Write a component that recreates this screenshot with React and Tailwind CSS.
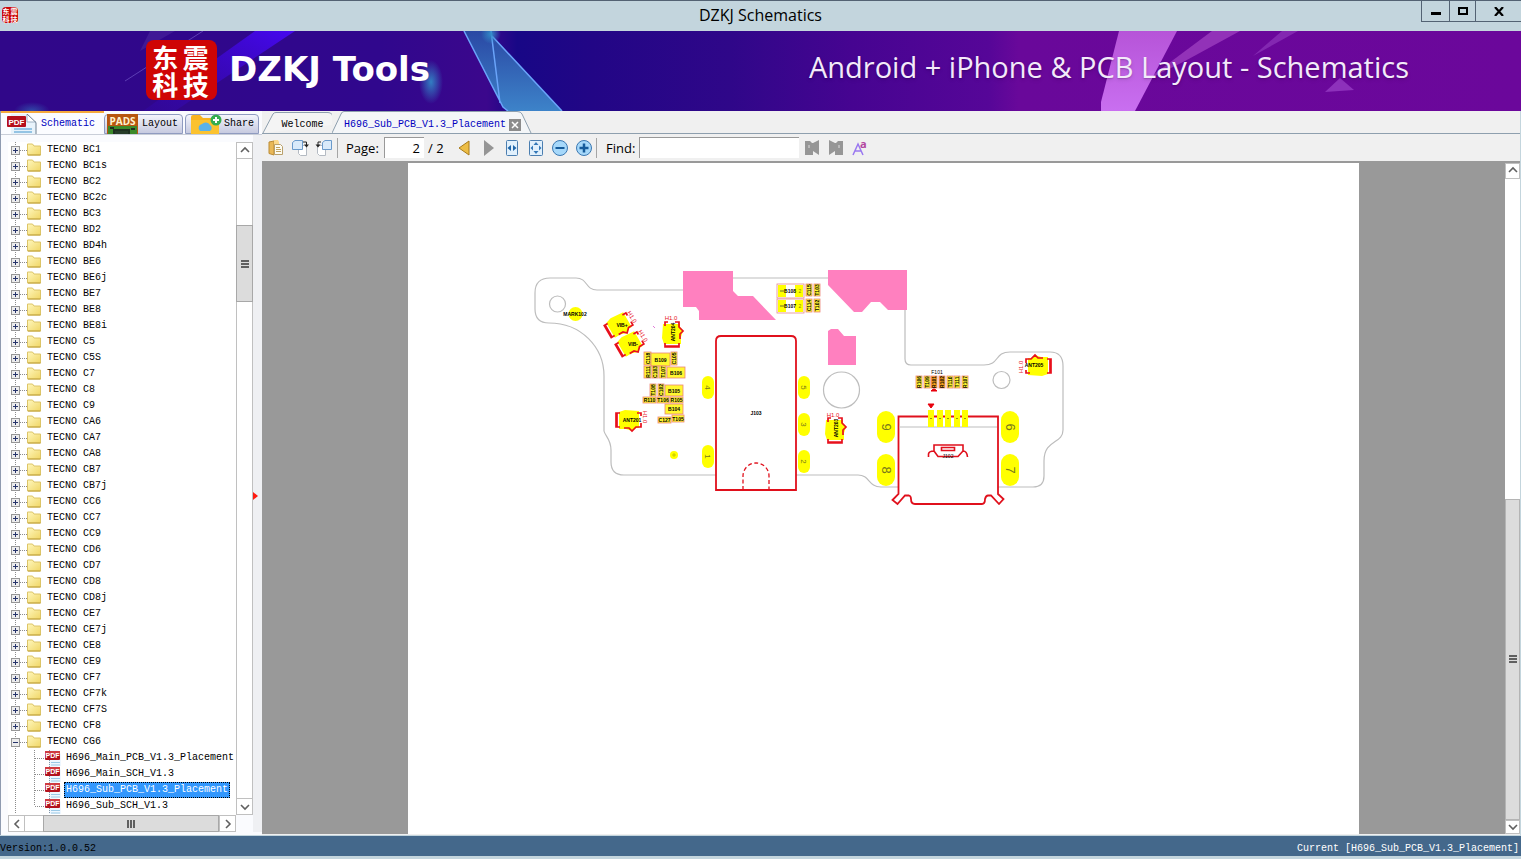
import React from "react";

const MONO = "font-['Liberation_Mono','Noto_Sans_CJK_SC',monospace] text-[10px] leading-4";
const UI = "font-['Open_Sans','Noto_Sans',sans-serif]";

const folders = [
  "BC1", "BC1s", "BC2", "BC2c", "BC3", "BD2", "BD4h", "BE6", "BE6j", "BE7", "BE8", "BE8i",
  "C5", "C5S", "C7", "C8", "C9", "CA6", "CA7", "CA8", "CB7", "CB7j", "CC6", "CC7", "CC9",
  "CD6", "CD7", "CD8", "CD8j", "CE7", "CE7j", "CE8", "CE9", "CF7", "CF7k", "CF7S", "CF8",
];

const files = [
  "H696_Main_PCB_V1.3_Placement",
  "H696_Main_SCH_V1.3",
  "H696_Sub_PCB_V1.3_Placement",
  "H696_Sub_SCH_V1.3",
];

function Chevron({ dir }) {
  const d = { up: "M2 7 6 3 10 7", down: "M2 4 6 8 10 4", left: "M8 2 4 6 8 10", right: "M4 2 8 6 4 10" }[dir];
  return (
    <svg className="h-3 w-3" viewBox="0 0 12 12" fill="none" stroke="#606060" strokeWidth="1.6" aria-hidden="true">
      <path d={d} />
    </svg>
  );
}

function ScrollButton({ dir, label, className }) {
  return (
    <button aria-label={label} className={"flex shrink-0 items-center justify-center border border-[#c0c0c0] bg-white " + className}>
      <Chevron dir={dir} />
    </button>
  );
}

function FolderIcon() {
  return (
    <svg className="h-4 w-4 shrink-0" viewBox="0 0 16 16" aria-hidden="true">
      <defs>
        <linearGradient id="fold" x1="0" y1="0" x2="1" y2="1">
          <stop offset="0" stopColor="#fff7bd" />
          <stop offset="1" stopColor="#f0d666" />
        </linearGradient>
      </defs>
      <path d="M.5 2h5l1.500 2h6.500v9H.5z" fill="url(#fold)" stroke="#dcc467" />
      <path d="M1 13h12.500" stroke="#bfa038" />
    </svg>
  );
}

function PdfIcon() {
  return (
    <svg className="h-4 w-4 shrink-0" viewBox="0 0 16 16" aria-hidden="true">
      <path d="M4 0h8l4 4v12H4z" fill="#eef7ff" />
      <path d="M6 12.500h9M6 15h9" stroke="#9bc9e6" />
      <path d="M4.500 0v16" stroke="#8295a8" strokeDasharray="1 1" />
      <rect x="0" y="1" width="15" height="9" rx="1" fill="#b3121d" />
      <rect x="0" y="1" width="15" height="4" rx="1" fill="#cf3a40" />
      <text x="7.500" y="8" fontSize="7" fontWeight="700" fill="#fff" textAnchor="middle" fontFamily="Liberation Sans, sans-serif">PDF</text>
    </svg>
  );
}

function Expander({ open, label }) {
  return (
    <button aria-label={label} aria-expanded={open} className="h-4 w-4 shrink-0">
      <svg className="h-4 w-4" viewBox="0 0 16 16" shapeRendering="crispEdges" aria-hidden="true">
        <path d="M4.500 0v16M9 8.500h7" stroke="#8c8c8c" strokeDasharray="1 1" />
        <rect x=".5" y="4.500" width="8" height="8" fill="#ececec" stroke="#969696" />
        <path d={open ? "M2 8.500h5" : "M2 8.500h5M4.500 6v5"} stroke="#26346b" />
      </svg>
    </button>
  );
}

function Sidebar() {
  return (
    <aside className="flex w-[262px] shrink-0 flex-col border-l border-[#8f9bb0] bg-[#fafbfe]">
      <div role="tablist" className={"flex h-[23px] shrink-0 items-end " + MONO}>
        <button role="tab" aria-selected="true" className="flex h-[23px] w-[103px] items-center gap-1 border-t-2 border-[#f5a93c] bg-[#fbfcff] pl-1 text-[#0000c0]">
          <svg className="h-5 w-8" viewBox="0 0 32 20" aria-hidden="true">
            <path d="M6 0h17l8 8v12H6z" fill="#e8f3fb" />
            <path d="M22 0v8h9" fill="#fff" stroke="#9db2c4" />
            <path d="M22 0 31 8.500V20" fill="none" stroke="#6d7f90" />
            <path d="M9 15h18M9 18h18" stroke="#94c4e4" strokeWidth="2" />
            <rect x="2" y="2" width="19" height="11" rx="1" fill="#b50f1b" />
            <text x="11.500" y="10.500" fontSize="8" fontWeight="700" fill="#fff" textAnchor="middle" fontFamily="Liberation Sans, sans-serif">PDF</text>
          </svg>
          Schematic
        </button>
        <button role="tab" aria-selected="false" className="flex h-5 w-[79px] items-center gap-1 rounded-t-sm border border-[#8f9bc0] bg-linear-to-b from-[#f4f5fc] to-[#c6cae0] pl-px">
          <svg className="h-5 w-8" viewBox="0 0 32 20" aria-hidden="true">
            <rect x="1" width="31" height="20" fill="#b7560f" />
            <rect x="2" y="12" width="29" height="8" fill="#3c8a2a" />
            <path d="M8 20v-4h15v4M4 14h4M25 15h4" fill="#263c28" stroke="#1e2f20" strokeWidth="2" />
            <text x="16.500" y="11" fontSize="10" fontWeight="700" fill="#fff2cf" textAnchor="middle" fontFamily="Open Sans, sans-serif">PADS</text>
          </svg>
          Layout
        </button>
        <button role="tab" aria-selected="false" className="ml-[2px] flex h-5 w-[74px] items-center gap-[2px] rounded-t-sm border border-[#8f9bc0] bg-linear-to-b from-[#f4f5fc] to-[#c6cae0] pl-1">
          <svg className="h-5 w-8" viewBox="0 0 32 20" aria-hidden="true">
            <path d="M1 3q0-2 2-2h7l3 3h14q2 0 2 2v14H1z" fill="#f9b320" />
            <path d="M1 6h28v14H1z" fill="#fbc22f" />
            <path d="M10 17a4 4 0 0 1 2-7 5 5 0 0 1 8 1 3.500 3.500 0 0 1 0 6z" fill="#5ab2ea" />
            <circle cx="26" cy="6" r="5.500" fill="#35ad4f" />
            <path d="M23 6h6M26 3v6" stroke="#fff" strokeWidth="2" />
          </svg>
          Share
        </button>
      </div>
      <div className="flex min-h-0 flex-1 border-t border-[#c9ced8] pb-[3px]">
        <div className="flex min-w-0 flex-1 flex-col pl-[7px] pt-[7px]">
          <div className="flex min-h-0 flex-1">
            <ul role="tree" className={"h-full min-h-0 w-[228px] overflow-hidden whitespace-nowrap bg-white pl-[3px] " + MONO}>
              {folders.map((f) => (
                <li key={f} role="treeitem" className="flex h-4 items-center">
                  <Expander open={false} label={"Expand TECNO " + f} />
                  <FolderIcon />
                  <span className="pl-1">TECNO {f}</span>
                </li>
              ))}
              <li role="treeitem">
                <div className="flex h-4 items-center">
                  <Expander open label="Collapse TECNO CG6" />
                  <FolderIcon />
                  <span className="pl-1">TECNO CG6</span>
                </div>
                <ul role="group">
                  {files.map((f, i) => (
                    <li key={f} role="treeitem" aria-selected={i === 2} className="flex h-4 items-center">
                      <svg className="h-4 w-[34px] shrink-0" viewBox="0 0 34 16" shapeRendering="crispEdges" aria-hidden="true">
                        <path d={"M4.500 0v16M24 8.500h10M23.500 0v" + (i === 3 ? "8" : "16")} stroke="#8c8c8c" strokeDasharray="1 1" />
                      </svg>
                      <PdfIcon />
                      <span className={i === 2 ? "ml-[3px] border border-dotted border-black bg-[#3297fd] px-px leading-[14px] text-white" : "pl-[5px]"}>{f}</span>
                    </li>
                  ))}
                </ul>
              </li>
              <li className="flex h-4 items-center pl-4" aria-hidden="true"><FolderIcon /></li>
            </ul>
            <div className="flex w-[17px] flex-col border-x border-[#c0c0c0] bg-white">
              <ScrollButton dir="up" label="Scroll tree up" className="-mx-px h-[17px]" />
              <div className="grow-2" />
              <div className="-mx-px flex h-[77px] flex-col items-center justify-center gap-px border border-[#a8a8a8] bg-[#dcdcdc]">
                <span className="h-[2px] w-2 bg-[#606060]" /><span className="h-[2px] w-2 bg-[#606060]" /><span className="h-[2px] w-2 bg-[#606060]" />
              </div>
              <div className="grow-15" />
              <ScrollButton dir="down" label="Scroll tree down" className="-mx-px h-[17px]" />
            </div>
          </div>
          <div className="flex h-[17px] w-[228px] shrink-0 border-y border-[#c0c0c0] bg-white">
            <ScrollButton dir="left" label="Scroll tree left" className="-my-px w-[17px]" />
            <div className="w-[18px]" />
            <div className="-my-px flex grow items-center justify-center gap-px border border-[#a8a8a8] bg-[#dcdcdc]">
              <span className="h-2 w-[2px] bg-[#606060]" /><span className="h-2 w-[2px] bg-[#606060]" /><span className="h-2 w-[2px] bg-[#606060]" />
            </div>
            <ScrollButton dir="right" label="Scroll tree right" className="-my-px w-[17px]" />
          </div>
        </div>
        <div className="flex w-[9px] shrink-0 items-center bg-[#eff0f3] pt-6">
          <svg className="h-2 w-[5px]" viewBox="0 0 5 8" aria-hidden="true"><path d="M0 0 5 4 0 8z" fill="#ff1a10" /></svg>
        </div>
      </div>
    </aside>
  );
}

function DocTabs() {
  return (
    <div role="tablist" className={"flex h-[23px] shrink-0 items-end border-b border-[#8e9fae] bg-[#f0f0f0] " + MONO}>
      <button role="tab" aria-selected="false" className="relative flex h-[22px] w-[70px] items-center justify-center pl-[11px] pt-[6px]">
        <svg className="absolute inset-0 h-full w-full" viewBox="0 0 70 22" aria-hidden="true">
          <path d="M1 22 11 3q1-1.500 3-1.500h52q3 0 4 2l4 10" fill="#f4f4f4" stroke="#8e9fae" />
        </svg>
        <span className="relative">Welcome</span>
      </button>
      <div className="relative flex h-[22px] w-[200px] items-center pl-[12px] pt-[6px]">
        <svg className="absolute inset-0 h-full w-full" viewBox="0 0 200 22" aria-hidden="true">
          <path d="M0 22 9 3q1-2.500 3-2.500h173q4 0 5 2.500l9 19" fill="#f4f6f8" stroke="#8e9fae" />
        </svg>
        <button role="tab" aria-selected="true" className="relative text-[#0000c0]">H696_Sub_PCB_V1.3_Placement</button>
        <button aria-label="Close tab" className="relative ml-[3px] flex h-3 w-3 items-center justify-center bg-[#8c8c8c]">
          <svg className="h-2 w-2" viewBox="0 0 8 8" stroke="#fff" strokeWidth="1.500" aria-hidden="true"><path d="M1 1 7 7M7 1 1 7" /></svg>
        </button>
      </div>
    </div>
  );
}

function ToolButton({ label, children }) {
  return (
    <button aria-label={label} className="flex h-6 w-6 shrink-0 items-center justify-center">
      <svg className="h-[18px] w-[18px] overflow-visible" viewBox="0 0 18 18" aria-hidden="true">{children}</svg>
    </button>
  );
}

function Toolbar() {
  return (
    <div className={"flex h-[27px] shrink-0 items-center bg-[#f0f0f0] pl-[2px] text-[13px] leading-5 text-black " + UI}>
      <ToolButton label="Open">
        <path d="M2 3 7 2v14l-5-1.500z" fill="#e9b857" stroke="#bb8b35" />
        <path d="M7 1h4l1 2v13H7z" fill="#fbd88b" />
        <path d="M7.500 5.500h6l2 2v8h-8z" fill="#fdfcf3" stroke="#b9a06c" />
        <path d="M9 8.500h4M9 10.500h5M9 12.500h5" stroke="#c1a360" />
      </ToolButton>
      <ToolButton label="Rotate right">
        <path d="M7.500 6.500h8v10h-6l-2-2z" fill="#fff" stroke="#b4bac2" />
        <path d="M1.500 3.500 4 1.500h7.500v9h-10z" fill="#d9eafa" stroke="#6a9acb" />
        <path d="M12 3h3.500v3" fill="none" stroke="#222" /><path d="M13 5.500h5l-2.500 3z" fill="#222" />
      </ToolButton>
      <ToolButton label="Rotate left">
        <path d="M2.500 6.500h8v10h-6l-2-2z" fill="#fff" stroke="#b4bac2" />
        <path d="M7.500 3.500 10 1.500h6.500v9h-9z" fill="#d9eafa" stroke="#6a9acb" />
        <path d="M6 3H3v3" fill="none" stroke="#222" /><path d="M.5 5.500h5L3 8.500z" fill="#222" />
      </ToolButton>
      <div className="mx-px h-5 w-px bg-[#a5a5a5]" />
      <label htmlFor="page" className="w-[45px] pl-[7px]">Page:</label>
      <input id="page" defaultValue="2" className="h-[21px] w-10 border-l border-t border-[#999] bg-white pr-1 text-right outline-none" />
      <span className="w-7 pl-1">/ 2</span>
      <ToolButton label="Previous page"><path d="M14 2v14L4 9z" fill="#edbd45" stroke="#a87b1b" /></ToolButton>
      <ToolButton label="Next page"><path d="M5 1 15 9 5 17z" fill="#959595" /></ToolButton>
      <ToolButton label="Fit width">
        <rect x="3.500" y="1.500" width="11" height="15" rx="1" fill="#e1f0fc" stroke="#4b7eb0" />
        <path d="M4.500 9 8 6v6zM13.500 9 10 6v6z" fill="#1f66a9" />
      </ToolButton>
      <ToolButton label="Fit page">
        <rect x="2.500" y="1.500" width="13" height="15" rx="1" fill="#e1f0fc" stroke="#4b7eb0" />
        <path d="M9 3 11.500 6h-5zM9 15 6.500 12h5zM3.500 9 6 6.500v5zM14.500 9 12 6.500v5z" fill="#3478b8" />
      </ToolButton>
      <ToolButton label="Zoom out">
        <circle cx="9" cy="9" r="7.500" fill="#a6d8fa" stroke="#3b78b2" /><path d="M4.500 9h9" stroke="#155b9b" strokeWidth="2" />
      </ToolButton>
      <ToolButton label="Zoom in">
        <circle cx="9" cy="9" r="7.500" fill="#a6d8fa" stroke="#3b78b2" /><path d="M4.500 9h9M9 4.500v9" stroke="#155b9b" strokeWidth="2.500" />
      </ToolButton>
      <div className="h-5 w-px bg-[#a5a5a5]" />
      <label htmlFor="find" className="w-[42px] pl-[9px]">Find:</label>
      <input id="find" className="h-[21px] w-40 border-l border-t border-[#999] bg-white px-1 outline-none" />
      <ToolButton label="Find previous"><path d="M3 2h5l2 2h1l6-3v15l-6-4v4H3z" fill="#969696" /><path d="M7 6v3" stroke="#ddd" /></ToolButton>
      <ToolButton label="Find next"><path d="M17 2h-5l-2 2H9L3 1v15l6-4v4h8z" fill="#969696" /><path d="M13 6v3" stroke="#ddd" /></ToolButton>
      <ToolButton label="Match case">
        <path d="M3 16 8 5l5 11M5 12h6" fill="none" stroke="#9a78f0" strokeWidth="1.500" />
        <text x="10" y="9" fontSize="11" fontWeight="700" fill="#b2459f" fontFamily="Open Sans, sans-serif">a</text>
      </ToolButton>
    </div>
  );
}

/* Small parts: [label, x, y, width, height, vertical label] */
const parts = [
  ["C118", 644, 352, 7, 13, 1], ["B109", 651, 353, 19, 13, 0], ["C105", 671, 352, 6, 13, 1],
  ["R111", 644, 366, 7, 12, 1], ["C103", 652, 366, 6, 12, 1], ["T107", 659, 366, 7, 12, 1], ["B106", 667, 367, 18, 11, 0],
  ["T108", 650, 384, 6, 12, 1], ["C102", 658, 384, 6, 12, 1], ["B105", 665, 385, 18, 11, 0],
  ["R110", 643, 397, 13, 6, 0], ["T106", 657, 397, 12, 6, 0], ["R105", 670, 397, 13, 6, 0],
  ["B104", 665, 404, 18, 10, 0], ["T105", 672, 415, 12, 7, 0], ["C127", 658, 417, 13, 6, 0],
  ["C115", 806, 284, 6, 12, 1], ["T103", 814, 284, 6, 12, 1], ["C114", 806, 299, 6, 13, 1], ["T102", 814, 299, 6, 13, 1],
  ["R106", 916, 376, 6, 12, 1], ["T109", 924, 376, 6, 12, 1], ["R101", 931, 376, 6, 12, 1], ["R102", 939, 376, 6, 12, 1],
  ["T110", 947, 376, 6, 12, 1], ["T111", 954, 376, 6, 12, 1], ["R107", 962, 376, 6, 12, 1],
];

/* Pads: [number, x, y, width, height, font size] */
const pads = [
  ["4", 702, 376, 12, 23, 8], ["1", 702, 445, 12, 23, 8],
  ["5", 798, 376, 12, 23, 8], ["3", 798, 413, 12, 23, 8], ["2", 798, 450, 12, 23, 8],
  ["9", 877, 411, 18, 32, 13], ["8", 877, 454, 18, 32, 13],
  ["6", 1001, 411, 18, 32, 13], ["7", 1001, 454, 18, 32, 13],
];

/* Spring contacts: [label, x, y, turn, label x, label y, label turn, H1.0 x, H1.0 y, H1.0 turn] */
const contacts = [
  ["VIB+", 619, 325, 60, 622, 326, 0, 632, 317, 60],
  ["VIB-", 630, 344, 60, 633, 345, 0, 643, 336, 60],
  ["ANT204", 672, 334, 0, 674, 332, -90, 671, 318, 0],
  ["ANT201", 629, 420, 90, 632, 421, 0, 645, 417, 90],
  ["ANT203", 835, 430, 0, 837, 428, -90, 833, 415, 0],
  ["ANT205", 1038, 366, -90, 1034, 366, 0, 1021, 367, -90],
];

function BoardDrawing() {
  return (
    <svg className="block w-full" viewBox="408 163 951 671" role="img" aria-label="H696 sub board placement" fontFamily="Liberation Sans, sans-serif">
      <g fill="none" stroke="#bdbdbd" strokeWidth="1.200">
        <path d="M683 290H597C585 290 588 278 576 278H550Q535 278 535 293V309Q535 323 549 323C581 323 604 347 604 376V431C605 436 611 439 611 450V462Q611 475 624 475H858C870 475 868 487 881 487H1033Q1044 487 1044 476V461C1044 439 1063 444 1063 430V366Q1063 352 1050 352H1010C994 352 1000 365 984 365H911Q905 365 905 359V300M733 278H830" />
        <circle cx="557.500" cy="304" r="8" />
        <circle cx="841.500" cy="390" r="18" />
        <circle cx="1001.500" cy="380" r="8.500" />
      </g>
      <g fill="#ff80bf">
        <path d="M683 271H733V291L738 296H753L776 320H699V311L696 307H683z" />
        <path d="M828 270H907V310H888L880 302H871L862 312H854L828 285z" />
        <path d="M828 331 831 329H838L844 336H856V365H828z" />
      </g>
      <circle cx="575.500" cy="314" r="7" fill="#ff0" />
      <text x="575" y="316" fontSize="5" fontWeight="700" textAnchor="middle">MARK102</text>
      <circle cx="674" cy="455" r="4" fill="#ff0" />
      <path d="M672 455h4M674 453v4" stroke="#a8a800" strokeWidth=".6" />
      <path d="m653 326 2 2" stroke="#e17bd8" />

      {[["B108", 284], ["B107", 299]].map(([t, y]) => (
        <g key={t}>
          <rect x="777" y={y} width="27" height="14" fill="#fff" stroke="#e48a8a" strokeWidth=".8" />
          <rect x="778" y={y + 1} width="8" height="12" fill="#ff0" />
          <rect x="795" y={y + 1} width="8" height="12" fill="#ff0" />
          <text x="790" y={y + 9} fontSize="5" fontWeight="700" textAnchor="middle">{t}</text>
          <text x="800" y={y + 9} fontSize="5" fill="#888800" textAnchor="middle">2</text>
          <path d={"M780 " + (y + 7) + "h4"} stroke="#444" strokeWidth=".8" />
        </g>
      ))}

      {parts.map(([t, x, y, w, h, v]) => (
        <g key={t}>
          <rect x={x} y={y} width={w} height={h} fill={t === "R101" || t === "R102" ? "#f7a01c" : "#fff830"} stroke="#ec8578" strokeWidth=".8" />
          <text
            transform={"translate(" + (x + w / 2) + " " + (y + h / 2) + ")" + (v ? " rotate(-90)" : "")}
            y="2" fontSize="5" fontWeight="700" textAnchor="middle"
          >{t}</text>
        </g>
      ))}
      <text x="937" y="374" fontSize="5" textAnchor="middle">F101</text>
      <path d="M931 391q3-4 6 0zM928 404h6l-3 4z" fill="#e8000c" stroke="#e8000c" />

      {contacts.map(([t, x, y, r, lx, ly, lr, hx, hy, hr]) => (
        <g key={t}>
          <g transform={"translate(" + x + " " + y + ") rotate(" + r + ")"}>
            <path d="M-9-10H8V-7L11-3 9 3V10H-8L-10 4z" fill="#ff0" />
            <path d="M-7 9v4H7V9M-7 12H7M-7-8v-4h3M3-12h4v5l4 4-3 3v5" fill="none" stroke="#e8101c" strokeWidth="1.700" />
          </g>
          <text transform={"translate(" + lx + " " + ly + ") rotate(" + lr + ")"} y="1" fontSize="5" fontWeight="700" textAnchor="middle">{t}</text>
          <text transform={"translate(" + hx + " " + hy + ") rotate(" + hr + ")"} y="2" fontSize="6" fill="#e8101c" textAnchor="middle">H1.0</text>
        </g>
      ))}

      {pads.map(([t, x, y, w, h, s]) => (
        <g key={t}>
          <rect x={x} y={y} width={w} height={h} rx={w / 2} fill="#ff0" />
          <text transform={"translate(" + (x + w / 2) + " " + (y + h / 2) + ") rotate(90)"} y={s / 3} fontSize={s} fill="#77771c" textAnchor="middle">{t}</text>
        </g>
      ))}

      <g fill="none" stroke="#e0101c" strokeWidth="1.800">
        <path d="M716 490V341Q716 336 721 336H791Q796 336 796 341V490z" fill="#fff" />
        <path d="M743 490V476A13 13 0 0 1 769 476V490" strokeDasharray="4 2.500" strokeWidth="1.300" />
        <path d="M898.500 416.500V494L892.500 500 897.500 504 905 495.500H909Q911 496 911 499 911 504 915 504H982Q985 504 985 499 986 495.500 988 495.500H991L999 504 1003.500 499 998 494V416.500z" fill="#fff" />
        <path d="M899 427H997" stroke="#bdbdbd" strokeWidth="1" />
        <path d="M928.500 457V454Q929 451 934 451V445H963V451Q967 451 967.500 457M934 451 938 456.500H958L963 451M941.500 447.500H954.500V450.500H941.500z" strokeWidth="1.600" />
      </g>
      {[928, 937, 945, 954, 962].map((x) => (
        <g key={x}>
          <rect x={x} y="410" width="6" height="17" fill="#ff0" />
          <path d={"M" + (x + 2) + " 418.500h2"} stroke="#999900" />
        </g>
      ))}
      <text x="756" y="415" fontSize="5" fontWeight="700" textAnchor="middle">J103</text>
      <text x="948" y="458" fontSize="5" textAnchor="middle">J102</text>
    </svg>
  );
}

function Banner() {
  return (
    <header className="relative flex h-20 shrink-0 items-center justify-between overflow-hidden bg-[#30078a] pl-[146px] pr-[112px]">
      <svg className="absolute inset-0 h-full w-full" viewBox="0 0 1521 80" preserveAspectRatio="none" aria-hidden="true">
        <defs>
          <linearGradient id="bg">
            <stop offset="0" stopColor="#300789" /><stop offset=".25" stopColor="#30078d" /><stop offset=".32" stopColor="#3b078c" />
            <stop offset=".34" stopColor="#180786" /><stop offset=".39" stopColor="#220686" /><stop offset=".48" stopColor="#2f0789" />
            <stop offset=".56" stopColor="#460491" /><stop offset=".65" stopColor="#560698" /><stop offset=".67" stopColor="#69089a" />
            <stop offset="1" stopColor="#6b079b" />
          </linearGradient>
          <linearGradient id="beam" x1="1" y1="0" x2="0" y2="1">
            <stop offset="0" stopColor="#4608f0" /><stop offset="1" stopColor="#3608c0" stopOpacity=".2" />
          </linearGradient>
          <linearGradient id="shard" x1="0" y1="0" x2="0" y2="1">
            <stop offset="0" stopColor="#2a48a4" /><stop offset="1" stopColor="#3d83c9" />
          </linearGradient>
          <linearGradient id="ray" x1="0" y1="0" x2="0" y2="1">
            <stop offset="0" stopColor="#b654d8" /><stop offset="1" stopColor="#c96ff0" />
          </linearGradient>
          <radialGradient id="glow"><stop offset="0" stopColor="#328bc8" /><stop offset="1" stopColor="#328bc8" stopOpacity="0" /></radialGradient>
        </defs>
        <path d="M0 0h1521v80H0z" fill="url(#bg)" />
        <path d="M255 0h40L175 80h-32z" fill="url(#beam)" />
        <path d="M203 0 125 50" stroke="#8a75de" opacity=".5" />
        <path d="M150 0h25l-35 20z" fill="#6347b0" opacity=".3" />
        <ellipse cx="431" cy="51" rx="12" ry="22" fill="url(#glow)" opacity=".9" />
        <ellipse cx="32" cy="80" rx="18" ry="9" fill="url(#glow)" opacity=".5" />
        <path d="M464 0h28v5L562 80H508L503 76z" fill="url(#shard)" />
        <path d="M464 0 503 76 508 80M491 0 500 72M492 5 562 80" fill="none" stroke="#6aa4fa" strokeWidth="1.500" />
        <circle cx="491" cy="3" r="10" fill="url(#glow)" />
        <path d="M1212 0h28l-55 30-40 20z" fill="#a445c4" opacity=".7" />
        <path d="M1282 0h16l-45 25z" fill="#9b48c8" opacity=".5" />
        <path d="M1119 0h58L1135 80h-34v-9z" fill="url(#ray)" />
        <path d="m1325 61 15-14 14 12z" fill="#8d31bb" />
      </svg>
      <div className="relative mb-1 flex items-center gap-3">
        <div className="mt-[2px] grid h-[60px] w-[71px] grid-cols-2 content-center justify-items-center rounded-lg bg-[#cf0505] pl-1 pr-[6px] font-['Noto_Sans_CJK_SC',sans-serif] text-[26px] font-bold leading-[27px] text-white">
          <span>东</span><span>震</span><span>科</span><span>技</span>
        </div>
        <h1 className="whitespace-nowrap font-['DejaVu_Sans',sans-serif] text-[34px] font-bold leading-10 text-white">DZKJ Tools</h1>
      </div>
      <p className={"relative mb-2 whitespace-nowrap text-[29px] leading-10 text-[#f3eafa] text-shadow-md " + UI}>Android + iPhone &amp; PCB Layout - Schematics</p>
    </header>
  );
}

export default function App() {
  return (
    <div className="flex h-screen flex-col overflow-hidden bg-[#c3d5dd] text-black">
      <div className="flex h-[31px] shrink-0 items-start border-t border-[#536273]">
        <div className="flex w-[100px] pl-[2px] pt-[6px]">
          <div className="grid h-4 w-4 grid-cols-2 place-items-center rounded-sm bg-[#cc0808] font-['Noto_Sans_CJK_SC',sans-serif] text-[7px] font-bold leading-[7px] text-white">
            <span>东</span><span>震</span><span>科</span><span>技</span>
          </div>
        </div>
        <div className={"flex-1 pt-[4px] text-center text-[16px] leading-5 " + UI}>DZKJ Schematics</div>
        <div className="flex h-[21px] w-[100px] border-b border-l border-[#536273]">
          <button aria-label="Minimize" className="flex w-7 items-center justify-center border-r border-[#536273]"><span className="mt-1 h-[3px] w-[10px] bg-black" /></button>
          <button aria-label="Maximize" className="flex w-[26px] items-center justify-center border-r border-[#536273]"><span className="h-2 w-[10px] border-2 border-black" /></button>
          <button aria-label="Close" className="flex flex-1 items-center justify-center">
            <svg className="h-[9px] w-[10px]" viewBox="0 0 10 9" stroke="#000" strokeWidth="2.200" aria-hidden="true"><path d="M1 0 9 9M9 0 1 9" /></svg>
          </button>
        </div>
      </div>
      <Banner />
      <div className="mr-px flex min-h-0 flex-1 bg-[#f0f0f0]">
        <Sidebar />
        <main className="flex min-w-0 flex-1 flex-col">
          <DocTabs />
          <Toolbar />
          <div className="mb-px flex min-h-0 flex-1 border-t-2 border-[#999]">
            <div className="flex min-w-0 flex-1 justify-center overflow-hidden bg-[#999]">
              <div className="w-[951px] max-w-full bg-white"><BoardDrawing /></div>
            </div>
            <div className="flex w-[15px] shrink-0 flex-col bg-white">
              <ScrollButton dir="up" label="Scroll page up" className="h-4" />
              <div className="flex-1" />
              <div className="flex flex-1 flex-col items-center justify-center gap-px border border-[#b4b4b4] bg-[#dcdcdc]">
                <span className="h-[2px] w-2 bg-[#606060]" /><span className="h-[2px] w-2 bg-[#606060]" /><span className="h-[2px] w-2 bg-[#606060]" />
              </div>
              <ScrollButton dir="down" label="Scroll page down" className="h-[14px]" />
            </div>
          </div>
        </main>
      </div>
      <footer className={"mb-[3px] flex h-[21px] shrink-0 items-end justify-between border-t border-[#c3d5dd] bg-[#44688b] pr-[2px] " + MONO}>
        <span className="-mb-px">Version:1.0.0.52</span>
        <span className="-mb-px text-white">Current [H696_Sub_PCB_V1.3_Placement]</span>
      </footer>
    </div>
  );
}
